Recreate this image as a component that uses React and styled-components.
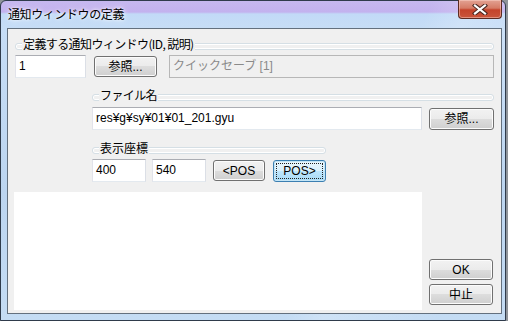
import React from 'react'
import styled, { createGlobalStyle } from 'styled-components'

const Global = createGlobalStyle`
  html, body {
    margin: 0;
    padding: 0;
    background: #8f949a;
  }
  body {
    width: 508px;
    height: 321px;
    overflow: hidden;
    font-family: "Liberation Sans", "Noto Sans CJK JP", sans-serif;
  }
`

const Window = styled.div`
  position: relative;
  box-sizing: border-box;
  width: 506px;
  height: 321px;
  border: 1px solid #2f3b4b;
  border-radius: 6px 6px 0 0;
  padding: 27px 3px 6px 6px;
  background:
    linear-gradient(115deg, rgba(255, 255, 255, 0) 0%, rgba(255, 255, 255, 0) 66%, rgba(255, 255, 255, 0.18) 72%, rgba(255, 255, 255, 0) 90%),
    linear-gradient(180deg, #c6b8ef 0px, #c3b2ee 11px, #c2daf7 13px, #c6ddf6 27px, #bcd5f0 60%, #c4dcf4 100%);
`

const TitleText = styled.div`
  position: absolute;
  left: 7px;
  top: 5px;
  font-family: "Noto Sans CJK JP", sans-serif;
  font-size: 12px;
  line-height: 16px;
  color: #000;
  letter-spacing: -0.4px;
  text-shadow: 0 0 6px rgba(255, 255, 255, 0.9), 0 0 3px rgba(255, 255, 255, 0.9);
`

const CloseButton = styled.div`
  position: absolute;
  right: 3px;
  top: -1px;
  width: 44px;
  height: 19px;
  box-sizing: border-box;
  border: 1px solid #5c2a22;
  border-top: none;
  border-radius: 0 0 4px 4px;
  background: linear-gradient(180deg, #e3a293 0%, #d57b66 45%, #c4432b 55%, #c9553c 100%);
  box-shadow: inset 0 0 0 1px rgba(255, 220, 210, 0.45);
  display: flex;
  align-items: center;
  justify-content: center;
`

const Client = styled.div`
  box-sizing: border-box;
  width: 100%;
  height: 100%;
  border: 1px solid #63707e;
  background: #f0f0f0;
  padding: 8px 7px 0 7px;
  display: flex;
  flex-direction: column;
  font-size: 12px;
  color: #000;
`

const GroupHead = styled.div`
  position: relative;
  height: 14px;
  width: ${p => (p.$w ? `${p.$w}px` : 'auto')};
  margin-top: ${p => p.$top || 0}px;
  margin-left: ${p => p.$indent || 0}px;
  &::before {
    content: '';
    position: absolute;
    left: 0;
    right: 0;
    top: 6px;
    height: 7px;
    box-sizing: border-box;
    border: 1px solid #d5dfe5;
    border-radius: 3px;
    box-shadow: inset 0 0 0 1px #fff;
  }
`

const GroupLabel = styled.span`
  position: relative;
  display: inline-block;
  margin-left: ${p => p.$left || 7}px;
  padding: 0 1px;
  background: #f0f0f0;
  font-family: "Noto Sans CJK JP", sans-serif;
  font-size: 12px;
  line-height: 14px;
  letter-spacing: ${p => p.$tight || 0}px;
`

const Row = styled.div`
  display: flex;
  align-items: center;
  margin-top: ${p => p.$top || 0}px;
  margin-left: ${p => p.$indent || 0}px;
`

const TextBox = styled.div`
  box-sizing: border-box;
  width: ${p => (p.$w ? `${p.$w}px` : 'auto')};
  flex: ${p => (p.$grow ? 1 : 'none')};
  height: 23px;
  margin-right: ${p => p.$gap || 0}px;
  border: 1px solid;
  border-color: ${p => (p.$disabled ? '#b7b7b7' : '#abadb3 #dbdfe6 #e3e9ef #e2e3ea')};
  background: ${p => (p.$disabled ? '#f0f0f0' : '#fff')};
  color: ${p => (p.$disabled ? '#8a8a8a' : '#000')};
  padding: 0 3px;
  font-size: 12px;
  line-height: 21px;
  white-space: nowrap;
  overflow: hidden;
`

const Button = styled.button`
  position: relative;
  box-sizing: border-box;
  flex: none;
  width: ${p => p.$w}px;
  height: ${p => p.$h || 21}px;
  margin-right: ${p => p.$gap || 0}px;
  padding: 0;
  border: 1px solid ${p => (p.$focus ? '#3c7fb1' : '#707070')};
  border-radius: 3px;
  background: ${p =>
    p.$focus
      ? 'linear-gradient(180deg, #eaf6fd 0%, #d9f0fc 50%, #bee6fd 50%, #a7d9f5 100%)'
      : 'linear-gradient(180deg, #f2f2f2 0%, #ebebeb 50%, #dddddd 50%, #cfcfcf 100%)'};
  box-shadow: inset 0 0 0 1px ${p => (p.$focus ? '#c4e5f6' : '#fcfcfc')};
  font-family: "Liberation Sans", "Noto Sans CJK JP", sans-serif;
  font-size: 12px;
  line-height: 16px;
  color: #000;
  &::after {
    content: '';
    display: ${p => (p.$focus ? 'block' : 'none')};
    position: absolute;
    inset: 2px;
    border: 1px dotted #222;
  }
`

const Bottom = styled.div`
  display: flex;
  margin-top: 10px;
  margin-left: -1px;
  height: 118px;
`

const Panel = styled.div`
  width: 408px;
  height: 118px;
  background: #fff;
  margin-right: 7px;
`

const SideButtons = styled.div`
  display: flex;
  flex-direction: column;
  justify-content: flex-end;
  gap: 4px;
  padding-bottom: 5px;
`

function CloseIcon() {
  return (
    <svg width="16" height="11" viewBox="0 0 16 11">
      <path d="M3 1.5 L13 9.5 M13 1.5 L3 9.5" stroke="#4a2620" strokeWidth="4.2" strokeLinecap="square" />
      <path d="M3 1.5 L13 9.5 M13 1.5 L3 9.5" stroke="#ffffff" strokeWidth="2.2" strokeLinecap="square" />
    </svg>
  )
}

export default function App() {
  return (
    <>
      <Global />
      <Window>
        <TitleText>通知ウィンドウの定義</TitleText>
        <CloseButton>
          <CloseIcon />
        </CloseButton>
        <Client>
          <GroupHead>
            <GroupLabel $tight={-0.6}>定義する通知ウィンドウ(ID, 説明)</GroupLabel>
          </GroupHead>
          <Row $top={4}>
            <TextBox $w={71} $gap={8}>1</TextBox>
            <Button $w={63} $gap={12}>参照...</Button>
            <TextBox $grow $disabled>クイックセーブ [1]</TextBox>
          </Row>

          <GroupHead $top={10} $indent={77}>
            <GroupLabel $left={7} $tight={-0.6}>ファイル名</GroupLabel>
          </GroupHead>
          <Row $top={5} $indent={77}>
            <TextBox $w={330} $gap={7}>res¥g¥sy¥01¥01_201.gyu</TextBox>
            <Button $w={65} $h={22}>参照...</Button>
          </Row>

          <GroupHead $top={11} $indent={77} $w={234}>
            <GroupLabel $left={7}>表示座標</GroupLabel>
          </GroupHead>
          <Row $top={4} $indent={77}>
            <TextBox $w={54} $gap={6}>400</TextBox>
            <TextBox $w={54} $gap={7}>540</TextBox>
            <Button $w={52} $gap={8}>&lt;POS</Button>
            <Button $w={53} $h={22} $focus>POS&gt;</Button>
          </Row>

          <Bottom>
            <Panel />
            <SideButtons>
              <Button $w={64}>OK</Button>
              <Button $w={64}>中止</Button>
            </SideButtons>
          </Bottom>
        </Client>
      </Window>
    </>
  )
}
